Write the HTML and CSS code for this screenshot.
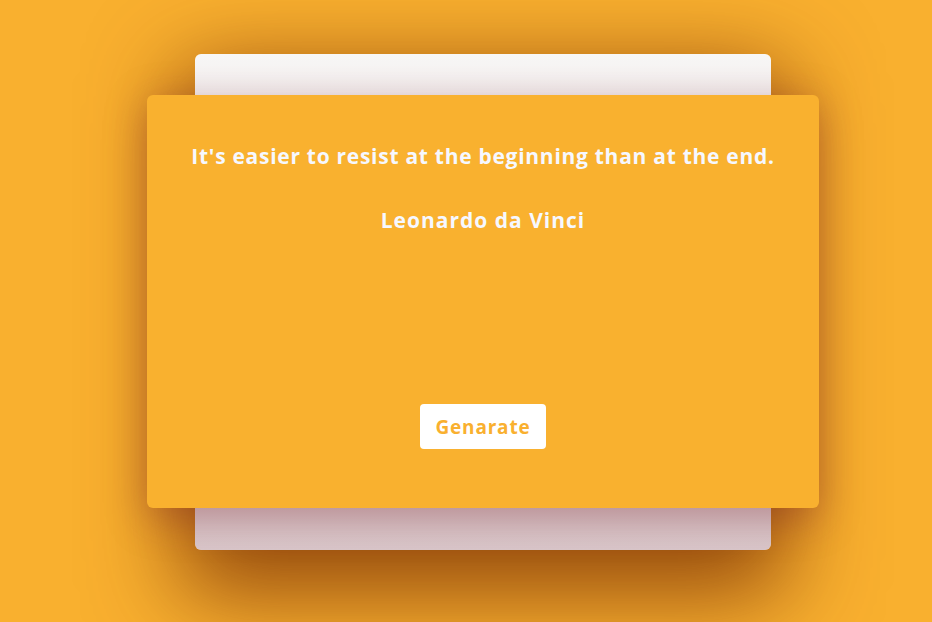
FILE: index.html
```html
<!DOCTYPE html>
<html lang="en">
<head>
<meta charset="utf-8">
<title>Quote Generator</title>
<link rel="stylesheet" href="styles.css">
</head>
<body>
<main class="stage">
  <div class="back-card"></div>
  <section class="quote-card">
    <p class="quote">It's easier to resist at the beginning than at the end.</p>
    <p class="author">Leonardo da Vinci</p>
    <button class="generate">Genarate</button>
  </section>
</main>
</body>
</html>
```
FILE: styles.css
```css
* { box-sizing: border-box; }
html, body { margin: 0; padding: 0; }
body {
  width: 932px;
  height: 622px;
  overflow: hidden;
  background: #f9b02f;
  font-family: "Open Sans", "DejaVu Sans", sans-serif;
}
.stage {
  display: grid;
  width: 672px;
  height: 496px;
  margin: 54px 0 0 147px;
}
.back-card {
  grid-area: 1 / 1;
  justify-self: center;
  width: 576px;
  height: 496px;
  border-radius: 6px;
  background: linear-gradient(180deg, #f8f7f6 0%, #e4d6d8 50%, #dac8cb 100%);
  box-shadow: 0 30px 90px 15px rgba(110, 35, 0, 0.72);
}
.quote-card {
  grid-area: 1 / 1;
  align-self: start;
  margin-top: 41px;
  width: 672px;
  height: 413px;
  border-radius: 6px;
  background: #f9b12f;
  box-shadow: 0 10px 40px rgba(120, 30, 40, 0.4);
  display: flex;
  flex-direction: column;
  align-items: center;
  padding: 46px 20px 59px;
  color: #f6f8ff;
}
.quote {
  margin: 0;
  font-size: 21px;
  line-height: 30px;
  font-weight: 700;
  letter-spacing: 0.72px;
  text-align: center;
}
.author {
  margin: 34px 0 0;
  font-size: 21px;
  line-height: 30px;
  font-weight: 700;
  letter-spacing: 1px;
}
.generate {
  margin-top: auto;
  width: 126px;
  height: 45px;
  padding: 0;
  border: none;
  border-radius: 4px;
  background: #ffffff;
  color: #f9b02f;
  font-family: inherit;
  font-size: 19px;
  font-weight: 700;
  letter-spacing: 0.8px;
  cursor: pointer;
}
```
